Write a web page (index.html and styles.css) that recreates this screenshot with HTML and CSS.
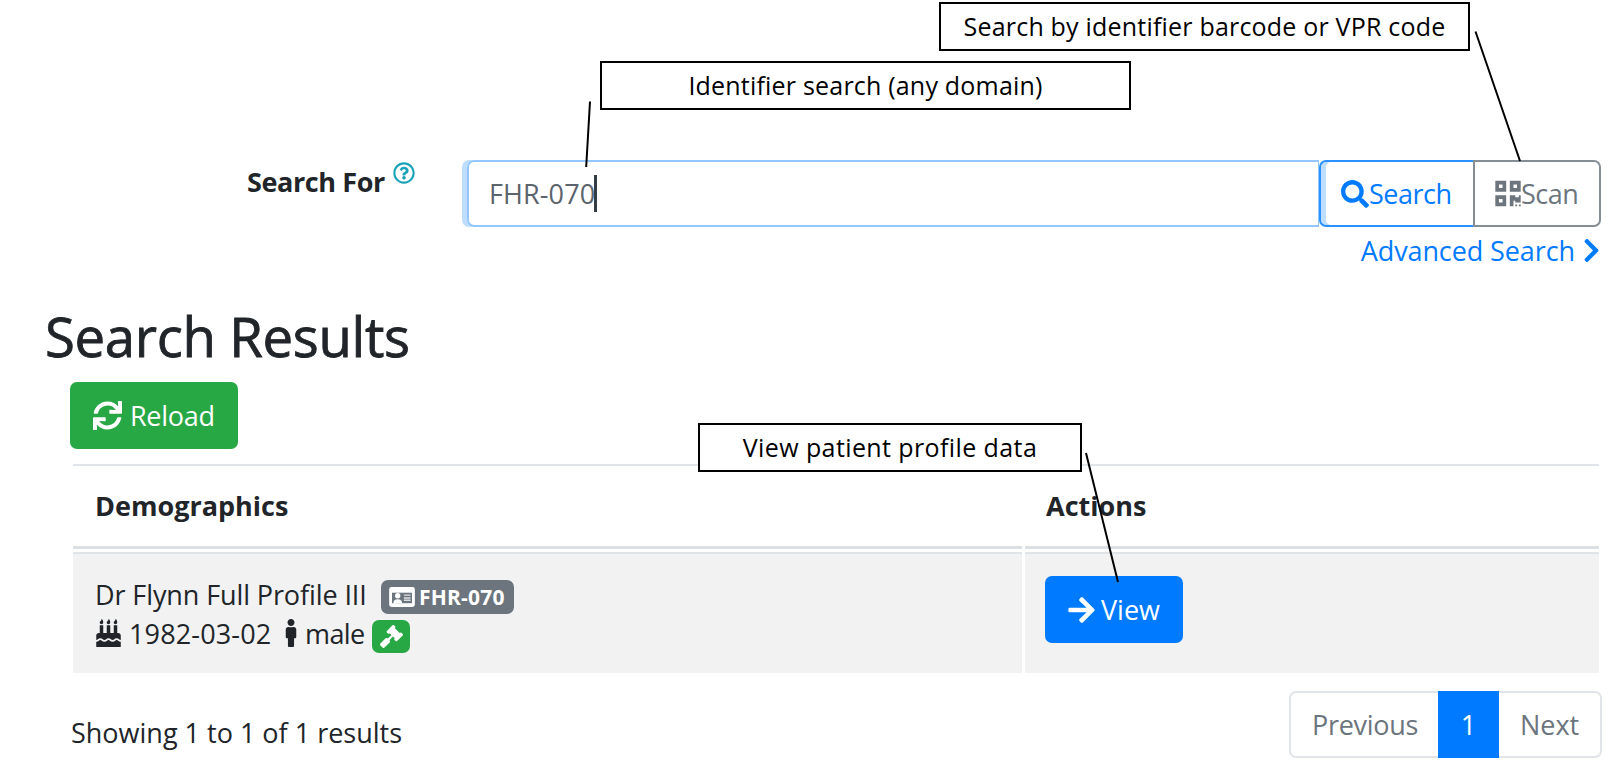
FILE: index.html
```
<!DOCTYPE html>
<html lang="en">
<head>
<meta charset="utf-8">
<title>Patient search</title>
<link rel="stylesheet" href="styles.css">
</head>
<body>
<main class="page">
  <form class="search-row">
    <label class="search-label">Search For
      <svg class="help-icon" viewBox="0 0 512 512"><path d="M256 8C119.043 8 8 119.083 8 256c0 136.997 111.043 248 248 248s248-111.003 248-248C504 119.083 392.957 8 256 8zm0 448c-110.532 0-200-89.431-200-200 0-110.495 89.472-200 200-200 110.491 0 200 89.471 200 200 0 110.53-89.431 200-200 200zm107.244-255.2c0 67.052-72.421 68.084-72.421 92.863V300c0 6.627-5.373 12-12 12h-45.647c-6.627 0-12-5.373-12-12v-8.659c0-35.745 27.1-50.034 47.579-61.516 17.561-9.845 28.324-16.541 28.324-29.579 0-17.246-21.999-28.693-39.784-28.693-23.189 0-33.894 10.977-48.942 29.969-4.057 5.12-11.46 6.071-16.666 2.124l-27.824-21.098c-5.107-3.872-6.251-11.066-2.644-16.363C184.846 131.491 214.94 112 261.794 112c49.071 0 101.45 38.304 101.45 88.8zM298 368c0 23.159-18.841 42-42 42s-42-18.841-42-42 18.841-42 42-42 42 18.841 42 42z"/></svg>
    </label>
    <div class="search-controls">
      <div class="input-group">
        <div class="search-input"><span>FHR-070</span><i class="caret"></i></div>
        <div class="btn-search">
          <svg class="icon-search" viewBox="0 0 512 512"><path d="M505 442.7L405.3 343c-4.5-4.5-10.6-7-17-7H372c27.6-35.3 44-79.7 44-128C416 93.1 322.9 0 208 0S0 93.1 0 208s93.1 208 208 208c48.3 0 92.7-16.4 128-44v16.3c0 6.4 2.5 12.5 7 17l99.7 99.7c9.4 9.4 24.6 9.4 33.9 0l28.3-28.3c9.4-9.4 9.4-24.6.1-34zM208 336c-70.7 0-128-57.2-128-128 0-70.7 57.2-128 128-128 70.7 0 128 57.2 128 128 0 70.7-57.2 128-128 128z"/></svg><span>Search</span>
        </div>
        <div class="btn-scan">
          <svg class="icon-qr" viewBox="0 0 448 512"><path d="M0 224h192V32H0v192zM64 96h64v64H64V96zm192-64v192h192V32H256zm128 128h-64V96h64v64zM0 480h192V288H0v192zm64-128h64v64H64v-64zm352-64h32v128h-96v-32h-32v96h-64V288h96v32h64v-32zm0 160h32v32h-32v-32zm-64 0h32v32h-32v-32z"/></svg><span>Scan</span>
        </div>
      </div>
      <a class="advanced">Advanced Search
        <svg class="icon-chevron" viewBox="0 0 320 512"><path d="M285.476 272.971L91.132 467.314c-9.373 9.373-24.569 9.373-33.941 0l-22.667-22.667c-9.357-9.357-9.375-24.522-.04-33.901L188.505 256 34.484 101.255c-9.335-9.379-9.317-24.544.04-33.901l22.667-22.667c9.373-9.373 24.569-9.373 33.941 0L285.475 239.03c9.373 9.372 9.373 24.568.001 33.941z"/></svg>
      </a>
    </div>
  </form>

  <h1 class="title">Search Results</h1>

  <section class="results">
    <div class="btn btn-reload">
      <svg class="icon-sync" viewBox="0 0 512 512"><path d="M440.65 12.57l4 82.77A247.16 247.16 0 0 0 255.83 8C134.73 8 33.91 94.92 12.29 209.82A12 12 0 0 0 24.09 224h49.05a12 12 0 0 0 11.67-9.26 175.91 175.91 0 0 1 317-56.94l-101.46-4.86a12 12 0 0 0-12.57 12v47.41a12 12 0 0 0 12 12H500a12 12 0 0 0 12-12V12a12 12 0 0 0-12-12h-47.37a12 12 0 0 0-11.98 12.57zM255.83 432a175.61 175.61 0 0 1-146-77.8l101.8 4.87a12 12 0 0 0 12.57-12v-47.4a12 12 0 0 0-12-12H12a12 12 0 0 0-12 12V500a12 12 0 0 0 12 12h47.35a12 12 0 0 0 12-12.6l-4.15-82.57A247.17 247.17 0 0 0 255.83 504c121.11 0 221.93-86.92 243.55-201.82a12 12 0 0 0-11.8-14.18h-49.05a12 12 0 0 0-11.67 9.26A175.86 175.86 0 0 1 255.83 432z"/></svg><span>Reload</span>
    </div>

    <table class="table">
      <thead>
        <tr><th class="col-demo">Demographics</th><th>Actions</th></tr>
      </thead>
      <tbody>
        <tr>
          <td>
            <div class="line">
              <span class="name">Dr Flynn Full Profile III</span>
              <span class="badge badge-id">
                <svg class="icon-card" viewBox="0 0 27 21"><rect class="card-frame" width="27" height="21" rx="2.5"/><rect class="card-inner" x="3" y="6" width="21" height="11"/><circle class="card-fill" cx="9" cy="9.2" r="2.8"/><path class="card-fill" d="M4.4 17c0-3 1.6-4.2 4.6-4.2s4.6 1.200 4.600 4.200z"/><path class="card-lines" d="M15.500 8.500h7M15.500 11.500h7M15.500 14h7"/></svg><span>FHR-070</span>
              </span>
            </div>
            <div class="line">
              <svg class="icon-cake" viewBox="0 0 448 512"><path d="M448 384c-28.02 0-31.26-32-74.5-32-43.43 0-46.825 32-74.75 32-27.695 0-31.454-32-74.75-32-42.842 0-47.218 32-74.5 32-28.148 0-31.202-32-74.75-32-43.547 0-46.653 32-74.75 32v-80c0-26.5 21.5-48 48-48h16V112h64v144h64V112h64v144h64V112h64v144h16c26.5 0 48 21.5 48 48v80zm0 128H0v-96c43.356 0 46.767-32 74.75-32 27.951 0 31.253 32 74.75 32 42.843 0 47.217-32 74.5-32 28.148 0 31.201 32 74.75 32 43.357 0 46.767-32 74.75-32 27.488 0 31.252 32 74.5 32v96zM96 96c-17.75 0-32-14.25-32-32 0-31 32-23 32-64 12 0 32 29.5 32 56s-14.25 40-32 40zm128 0c-17.75 0-32-14.25-32-32 0-31 32-23 32-64 12 0 32 29.5 32 56s-14.25 40-32 40zm128 0c-17.75 0-32-14.25-32-32 0-31 32-23 32-64 12 0 32 29.5 32 56s-14.25 40-32 40z"/></svg>
              <span class="date">1982-03-02</span>
              <svg class="icon-male" viewBox="0 0 192 512"><path d="M96 0c35.346 0 64 28.654 64 64s-28.654 64-64 64-64-28.654-64-64S60.654 0 96 0m48 144h-11.36c-22.711 10.443-49.59 10.894-73.28 0H48c-26.51 0-48 21.49-48 48v136c0 13.255 10.745 24 24 24h16v136c0 13.255 10.745 24 24 24h64c13.255 0 24-10.745 24-24V352h16c13.255 0 24-10.745 24-24V192c0-26.51-21.49-48-48-48z"/></svg>
              <span class="gender">male</span>
              <span class="badge badge-gavel">
                <svg class="icon-gavel" viewBox="0 0 512 512"><path d="M504.971 199.362l-22.627-22.627c-9.373-9.373-24.569-9.373-33.941 0l-5.657 5.657L329.608 69.255l5.657-5.657c9.373-9.373 9.373-24.569 0-33.941L312.638 7.029c-9.373-9.373-24.569-9.373-33.941 0L154.246 131.48c-9.373 9.373-9.373 24.569 0 33.941l22.627 22.627c9.373 9.373 24.569 9.373 33.941 0l5.657-5.657 39.598 39.598-81.04 81.04-5.657-5.657c-12.497-12.497-32.758-12.497-45.255 0L9.373 412.118c-12.497 12.497-12.497 32.758 0 45.255l45.255 45.255c12.497 12.497 32.758 12.497 45.255 0l114.745-114.745c12.497-12.497 12.497-32.758 0-45.255l-5.657-5.657 81.04-81.04 39.598 39.598-5.657 5.657c-9.373 9.373-9.373 24.569 0 33.941l22.627 22.627c9.373 9.373 24.569 9.373 33.941 0l124.451-124.451c9.372-9.372 9.372-24.568 0-33.941z"/></svg>
              </span>
            </div>
          </td>
          <td>
            <div class="btn btn-view">
              <svg class="icon-arrow" viewBox="0 0 448 512"><path d="M190.5 66.9l22.2-22.2c9.4-9.4 24.6-9.4 33.9 0L441 239c9.4 9.4 9.4 24.6 0 33.9L246.6 467.3c-9.4 9.4-24.6 9.4-33.9 0l-22.2-22.2c-9.5-9.5-9.3-25 .4-34.3L311.4 296H24c-13.3 0-24-10.7-24-24v-32c0-13.3 10.7-24 24-24h287.4L190.9 101.2c-9.8-9.3-10-24.8-.4-34.3z"/></svg><span>View</span>
            </div>
          </td>
        </tr>
      </tbody>
    </table>

    <footer class="table-footer">
      <span class="summary">Showing 1 to 1 of 1 results</span>
      <nav class="pagination">
        <span class="page-item prev">Previous</span><span class="page-item active">1</span><span class="page-item next">Next</span>
      </nav>
    </footer>
  </section>
</main>

<div class="callout callout-scan">Search by identifier barcode or VPR code</div>
<div class="callout callout-identifier">Identifier search (any domain)</div>
<div class="callout callout-view">View patient profile data</div>
<svg class="leaders" viewBox="0 0 1614 780"><path d="M1475.500 31.500L1520 161M590 101.500L586.200 167M1086 453L1118 582"/></svg>
</body>
</html>
```
FILE: styles.css
```
* { box-sizing: border-box; }
body {
  margin: 0;
  position: relative;
  height: 780px;
  overflow: hidden;
  background: #fff;
  color: #212529;
  font: 400 27px/42px "Open Sans", "Noto Sans", sans-serif;
  white-space: nowrap;
}
svg { display: block; flex: none; fill: currentColor; }

.page { padding: 160px 13px 0 0; }

.search-row { display: flex; justify-content: space-between; height: 143px; }
.search-label {
  display: flex;
  padding: 1px 0 0 247px;
  font-weight: 700;
  letter-spacing: -0.4px;
}
.help-icon { width: 22px; height: 22px; margin: 1px 0 0 8px; color: #17a2b8; }
.search-controls { width: 1134px; }
.input-group { display: flex; height: 67px; }
.search-input {
  display: flex;
  align-items: center;
  width: 852px;
  padding-left: 20px;
  border: 2px solid #92c8ff;
  border-right-width: 1px;
  border-radius: 7px 0 0 7px;
  box-shadow: -5px 0 0 #bfdeff;
  color: #5b646c;
  letter-spacing: 0.1px;
}
.caret { width: 3px; height: 37px; margin-left: -1px; background: #343d46; }
.btn-search {
  display: flex;
  align-items: center;
  width: 154px;
  padding-left: 20px;
  border: 2px solid #2b91ff;
  border-right: 0;
  border-radius: 7px 0 0 7px;
  box-shadow: inset 5px 0 0 #bfdeff;
  color: #007bff;
  letter-spacing: -0.5px;
}
.icon-search { width: 28px; height: 28px; }
.btn-scan {
  display: flex;
  align-items: center;
  width: 128px;
  padding-left: 20px;
  border: 2px solid #868e95;
  border-radius: 0 7px 7px 0;
  color: #6c757d;
  letter-spacing: -0.5px;
}
.icon-qr { width: 26px; height: 29px; }
.advanced {
  display: flex;
  justify-content: flex-end;
  align-items: center;
  padding: 3px 1px 0 0;
  color: #007bff;
  letter-spacing: -0.1px;
}
.icon-chevron { width: 17px; height: 27px; margin: 0 0 1px 8px; }

.title {
  margin: 0 0 13px 45px;
  font-size: 54.5px;
  line-height: 66px;
  font-weight: 500;
  letter-spacing: -0.35px;
  -webkit-text-stroke: 0.8px currentColor;
}

.results { padding-left: 70px; }
.btn {
  display: flex;
  align-items: center;
  height: 67px;
  border-radius: 7px;
  color: #fff;
}
.btn-reload { width: 168px; padding-left: 23px; background: #28a745; letter-spacing: -0.3px; }
.icon-sync { width: 29px; height: 29px; margin-right: 8px; }

.table {
  width: 1532px;
  margin-top: 12px;
  border-collapse: separate;
  border-spacing: 3px;
  table-layout: fixed;
}
.table th {
  height: 85px;
  padding: 0 21px;
  border-top: 2px solid #e1e4e8;
  border-bottom: 3px solid #dce0e5;
  text-align: left;
  vertical-align: middle;
  font-weight: 700;
}
.table .col-demo { width: 949px; padding-left: 22px; }
.table td {
  height: 121px;
  padding: 21px 20px 20px;
  border-top: 2px solid #e1e4e7;
  background: #f2f2f2;
  vertical-align: top;
}
.line { display: flex; align-items: flex-end; height: 39px; line-height: 39px; }
.name { width: 274px; padding-left: 2px; letter-spacing: -0.1px; }
.badge { display: flex; align-items: center; border-radius: 7px; color: #fff; }
.badge-id {
  width: 133px;
  height: 34px;
  margin-left: 14px;
  padding-left: 8px;
  background: #6c757d;
  font-size: 21px;
  font-weight: 700;
  letter-spacing: 0.2px;
}
.icon-card { width: 26px; height: 20px; margin-right: 4px; }
.card-frame, .card-fill { fill: #fff; }
.card-inner { fill: #6c757d; }
.card-lines { fill: none; stroke: #dfe2e5; stroke-width: 1.500px; }
.icon-cake { width: 25px; height: 28px; margin: 0 8px 6px 3px; }
.date { width: 145px; letter-spacing: 0.15px; }
.icon-male { width: 12px; height: 28px; margin: 0 8px 6px 11px; }
.gender { width: 61px; letter-spacing: -0.6px; }
.badge-gavel { width: 38px; height: 33px; margin-left: 6px; justify-content: center; background: #28a745; }
.icon-gavel { width: 23px; height: 23px; }
.btn-view { width: 138px; padding-left: 23px; margin-top: 1px; background: #007bff; }
.icon-arrow { width: 27px; height: 30px; margin-right: 6px; }

.table-footer { display: flex; justify-content: space-between; margin: 15px -1px 0 0; }
.summary { padding: 21px 0 0 1px; }
.pagination {
  display: flex;
  width: 313px;
  height: 67px;
  border: 2px solid #e1e4e8;
  border-radius: 7px;
  color: #6c757d;
}
.page-item { display: flex; align-items: center; }
.prev { width: 147px; padding-left: 21px; letter-spacing: -0.3px; }
.active { width: 61px; margin: -2px 0; justify-content: center; background: #007bff; color: #fff; }
.next { padding-left: 21px; }

.callout {
  position: absolute;
  height: 49px;
  border: 2px solid #000;
  background: #fff;
  color: #000;
  font-size: 25px;
  line-height: 45px;
  letter-spacing: 0.2px;
  text-align: center;
}
.callout-scan { left: 939px; top: 2px; width: 531px; }
.callout-identifier { left: 600px; top: 61px; width: 531px; }
.callout-view { left: 698px; top: 423px; width: 384px; letter-spacing: 0.4px; }
.leaders {
  position: absolute;
  left: 0;
  top: 0;
  width: 1614px;
  height: 780px;
  fill: none;
  stroke: #000;
  stroke-width: 2px;
}
```
